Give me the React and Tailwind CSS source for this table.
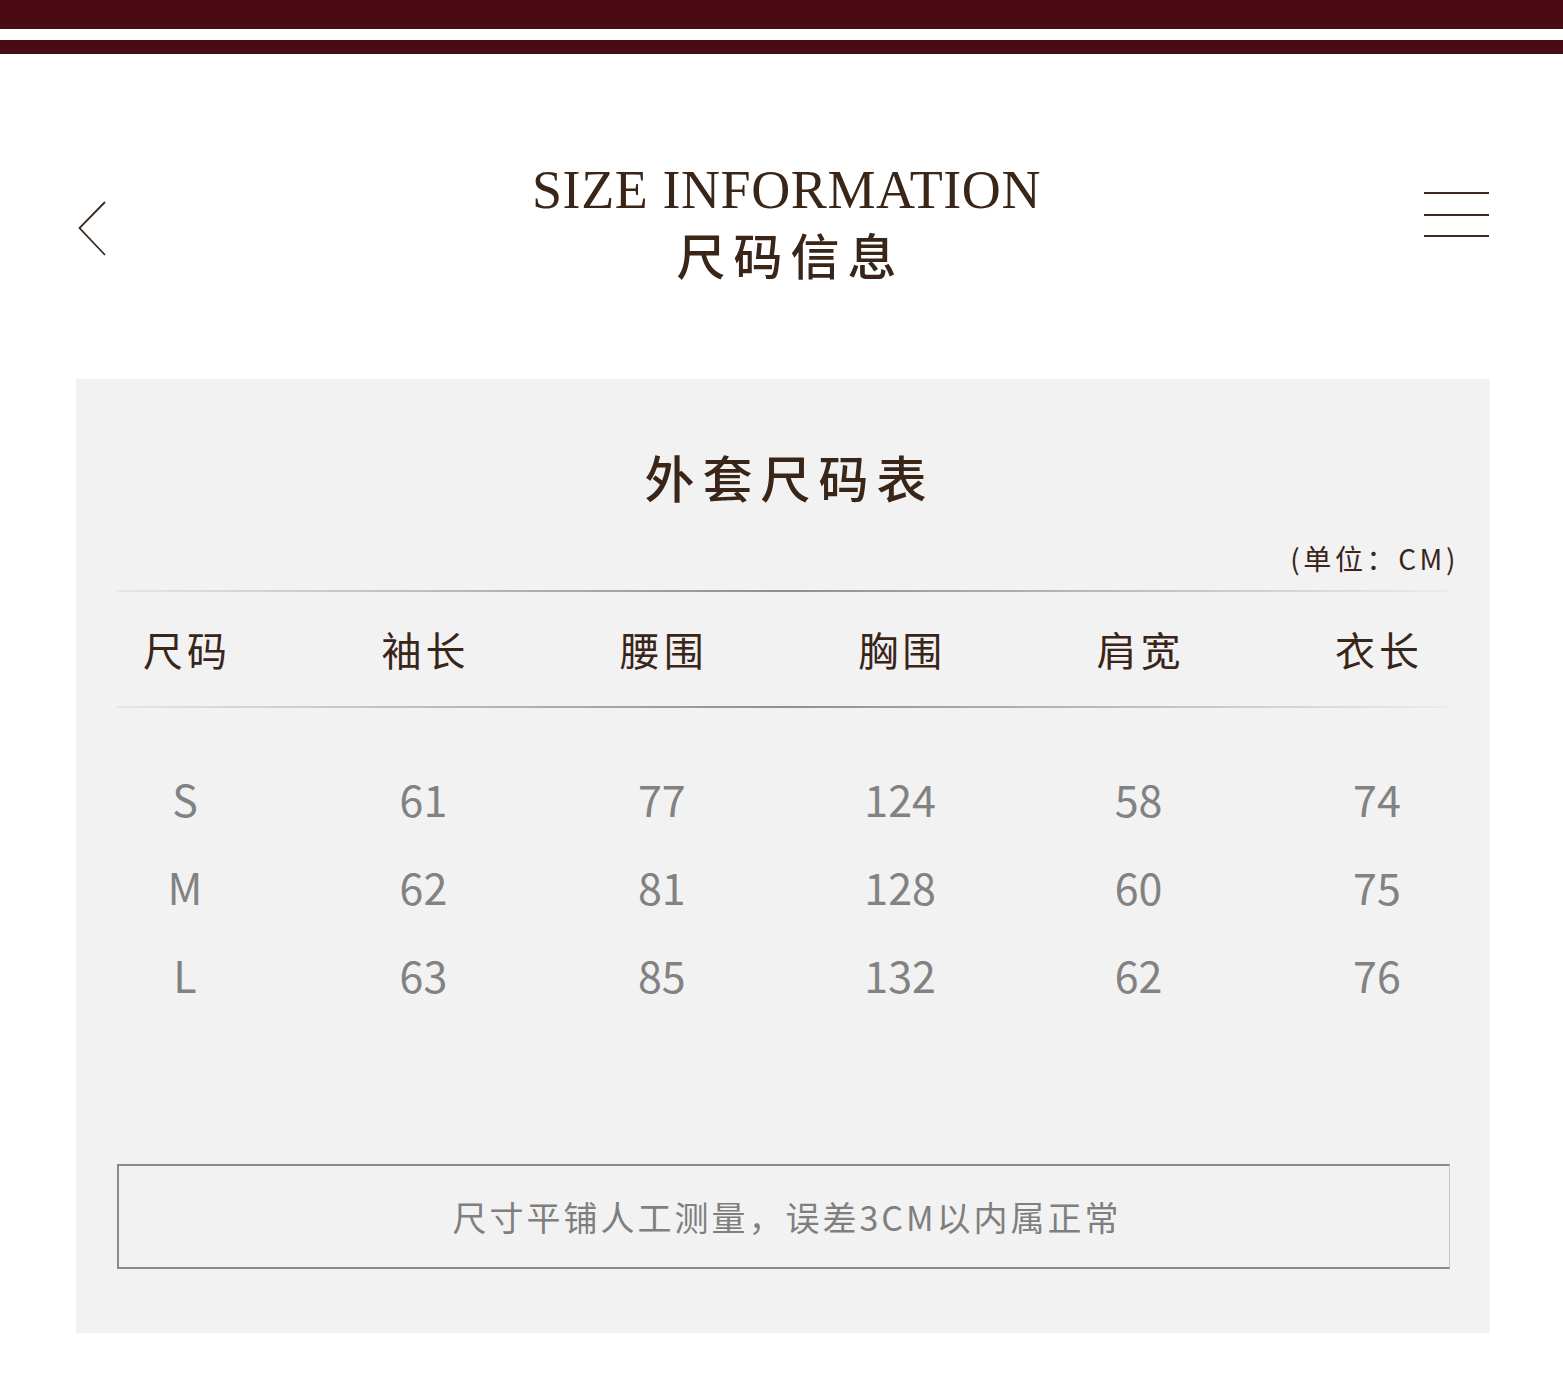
import React from "react";

const cjk = { fontFamily: '"Noto Sans CJK SC", "Noto Sans", sans-serif' };
const serif = { fontFamily: '"Liberation Serif", "DejaVu Serif", serif' };

const headers = ["尺码", "袖长", "腰围", "胸围", "肩宽", "衣长"];
const rows = [
  ["S", "61", "77", "124", "58", "74"],
  ["M", "62", "81", "128", "60", "75"],
  ["L", "63", "85", "132", "62", "76"],
];

function Line() {
  return (
    <div className="h-[2px] w-full bg-linear-to-r from-[#e6e6e6] via-[#8f8f8f] to-[#ececec]" />
  );
}

export default function App() {
  return (
    <div className="w-[1563px] h-[1397px] bg-white overflow-hidden" style={cjk}>
      {/* top bars */}
      <div className="h-[29px] bg-[#4b0b14]" />
      <div className="h-[14px] mt-[11px] bg-[#4b0b14]" />

      {/* header */}
      <div className="h-[325px] flex items-start pl-[78px] pr-[74px]">
        <div className="w-[65px] mt-[147px]">
          <svg width="30" height="56" viewBox="0 0 30 56" fill="none">
            <path d="M27 1 L1.5 27 L27 54" stroke="#3a2a20" strokeWidth="1.8" />
          </svg>
        </div>
        <div className="flex-1 flex flex-col items-center pt-[106px]">
          <div
            className="text-[54px] leading-[60px] tracking-[0.6px] pl-[6px] text-[#3a2519]"
            style={serif}
          >
            SIZE INFORMATION
          </div>
          <div className="text-[49px] leading-[60px] tracking-[8px] pl-[14px] mt-[4px] font-medium text-[#3a2519]">
            尺码信息
          </div>
        </div>
        <div className="w-[65px] mt-[138px] flex flex-col gap-[19.5px]">
          <div className="h-[2px] bg-[#3a2a20]" />
          <div className="h-[2px] bg-[#3a2a20]" />
          <div className="h-[2px] bg-[#3a2a20]" />
        </div>
      </div>

      {/* panel */}
      <div className="ml-[76px] w-[1414px] h-[954px] bg-[#f2f2f2] flex flex-col pt-[67px] pl-[41px] pr-[40px]">
        <div className="h-[60px] flex items-center justify-center text-[50px] tracking-[8px] pl-[12px] font-medium text-[#3a2519]">
          外套尺码表
        </div>
        <div className="h-[30px] mt-[37px] flex items-center justify-end -mr-[9px] text-[28px] tracking-[3.6px] text-[#3a2519]">
          (单位：CM)
        </div>
        <div className="mt-[17px]">
          <Line />
        </div>
        <div className="h-[114px] flex items-center justify-between pl-[8px] pr-[13px]">
          {headers.map((h) => (
            <div
              key={h}
              className="w-[120px] text-center text-[40px] tracking-[4px] pl-[4px] text-[#3a2519]"
            >
              {h}
            </div>
          ))}
        </div>
        <Line />
        <div className="mt-[46px] flex flex-col">
          {rows.map((r) => (
            <div
              key={r[0]}
              className="h-[88px] flex items-center justify-between pl-[8px] pr-[13px]"
            >
              {r.map((v, i) => (
                <div
                  key={i}
                  className="w-[120px] text-center text-[43px] text-[#828282]"
                >
                  {v}
                </div>
              ))}
            </div>
          ))}
        </div>
        <div className="mt-[146px] h-[105px] border-2 border-[#8a8a8a] border-r border-r-[#c4c4c4] flex items-center justify-center text-[34px] tracking-[3px] pl-[6px] text-[#7f7f7f]">
          尺寸平铺人工测量，误差3CM以内属正常
        </div>
      </div>
    </div>
  );
}
